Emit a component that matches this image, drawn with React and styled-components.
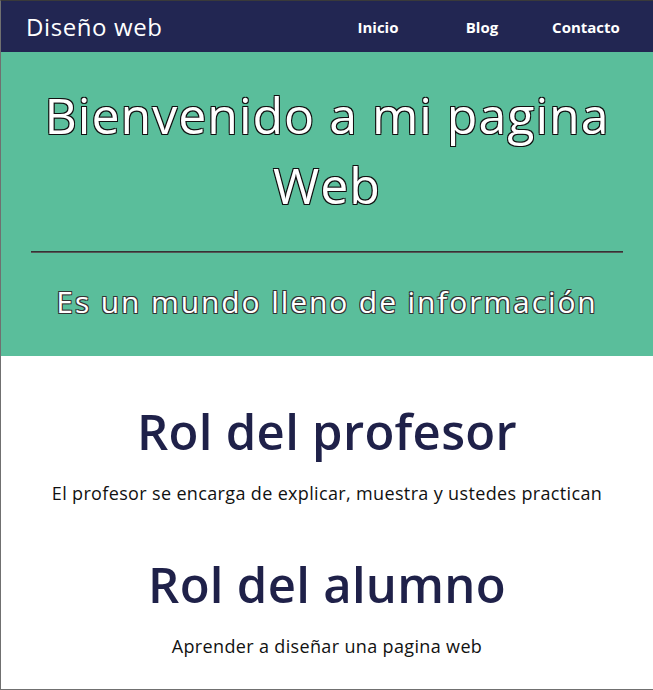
import React from "react";
import styled, { createGlobalStyle } from "styled-components";

const GlobalStyle = createGlobalStyle`
  html, body {
    margin: 0;
    padding: 0;
    background: #ffffff;
  }
  body {
    font-family: "Open Sans", "Noto Sans", sans-serif;
  }
`;

const Page = styled.div`
  box-sizing: border-box;
  height: 690px;
  overflow: hidden;
  border: 1px solid #707070;
  border-top-color: #3a3a3a;
  border-right: none;
`;

//Header
const Header = styled.header`
  height: 51px;
  background-color: #222652;
  display: flex;
  align-items: center;
  justify-content: space-between;
  padding: 0 15px 0 25px;
  color: white;
`;

const Logo = styled.div`
  font-size: 24px;
  font-weight: 400;
  letter-spacing: 0.6px;
`;

const Nav = styled.nav`
  display: flex;
  align-items: center;
`;

const NavLink = styled.a`
  width: 104px;
  text-align: center;
  color: white;
  text-decoration: none;
  font-size: 15px;
  font-weight: 700;
`;

//Hero
const Hero = styled.section`
  height: 304px;
  background-color: #5abe9b;
  display: flex;
  flex-direction: column;
  align-items: center;
  padding: 0 30px;
  text-align: center;
`;

const outline = (c) => `
  color: white;
  text-shadow: -1px -1px 0 ${c}, 1px -1px 0 ${c}, -1px 1px 0 ${c},
    1px 1px 0 ${c};
`;

const Title = styled.h1`
  ${outline("#111")}
  margin: 28px 0 0;
  font-size: 50px;
  font-weight: 400;
  line-height: 70px;
  letter-spacing: 1px;
`;

const Rule = styled.hr`
  align-self: stretch;
  margin: 31px 0 0;
  border: none;
  border-top: 1px solid #333;
  border-bottom: 1px solid #555;
  height: 0;
`;

const Subtitle = styled.h2`
  ${outline("#333")}
  margin: 28px 0 0;
  font-size: 30px;
  font-weight: 400;
  letter-spacing: 1.9px;
`;

//Content
const Content = styled.main`
  display: flex;
  flex-direction: column;
  align-items: center;
  text-align: center;
  padding-top: 42px;
`;

const Block = styled.div`
  margin-bottom: 46px;
`;

const Heading = styled.h3`
  margin: 0;
  color: #1f2149;
  font-size: 49px;
  font-weight: 600;
  line-height: 66px;
  letter-spacing: 0.3px;
`;

const Text = styled.p`
  margin: 17px 0 0;
  color: #111;
  font-size: 18px;
  letter-spacing: 0.35px;
`;

export default function App() {
  return (
    <Page>
      <GlobalStyle />
      <Header>
        <Logo>Diseño web</Logo>
        <Nav>
          <NavLink href="#">Inicio</NavLink>
          <NavLink href="#">Blog</NavLink>
          <NavLink href="#">Contacto</NavLink>
        </Nav>
      </Header>
      <Hero>
        <Title>
          Bienvenido a mi pagina
          <br />
          Web
        </Title>
        <Rule />
        <Subtitle>Es un mundo lleno de información</Subtitle>
      </Hero>
      <Content>
        <Block>
          <Heading>Rol del profesor</Heading>
          <Text>El profesor se encarga de explicar, muestra y ustedes practican</Text>
        </Block>
        <Block>
          <Heading>Rol del alumno</Heading>
          <Text>Aprender a diseñar una pagina web</Text>
        </Block>
      </Content>
    </Page>
  );
}
